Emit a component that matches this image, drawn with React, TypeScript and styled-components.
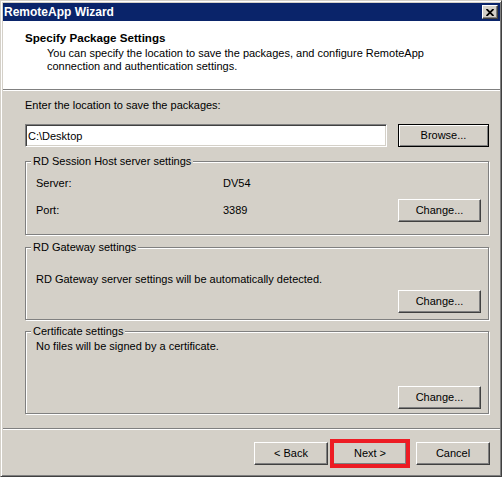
import React from "react";
import styled, { createGlobalStyle, css } from "styled-components";

const GlobalStyle = createGlobalStyle`
  html, body {
    margin: 0;
    padding: 0;
    background: #ffffff;
  }
  body {
    font-family: "Liberation Sans", Arial, sans-serif;
    font-size: 11px;
    color: #000;
  }
  button, input {
    font: inherit;
    color: inherit;
  }
`;

const Window = styled.div`
  width: 502px;
  height: 477px;
  box-sizing: border-box;
  display: flex;
  flex-direction: column;
  background: #d4d0c8;
  border: 1px solid;
  border-color: #d4d0c8 #404040 #404040 #d4d0c8;
  box-shadow: inset 1px 1px 0 #fff, inset -1px -1px 0 #808080;
  padding: 2px 1px 1px 2px;
`;

const TitleBar = styled.div`
  flex: none;
  height: 18px;
  display: flex;
  align-items: center;
  justify-content: space-between;
  background: #0a246a;
  padding: 0 2px 0 1px;
`;

const Title = styled.span`
  color: #fff;
  font-weight: bold;
  font-size: 12px;
  line-height: 18px;
`;

const CloseButton = styled.button`
  width: 16px;
  height: 14px;
  box-sizing: border-box;
  padding: 0;
  display: flex;
  align-items: center;
  justify-content: center;
  background: #d4d0c8;
  border: 1px solid;
  border-color: #fff #404040 #404040 #fff;
  box-shadow: inset -1px -1px 0 #808080;
`;

const Header = styled.div`
  flex: none;
  height: 68px;
  box-sizing: border-box;
  background: #fff;
  padding: 10px 0 0 22px;
`;

const HeaderTitle = styled.div`
  font-weight: bold;
  font-size: 11.6px;
  line-height: 14px;
`;

const HeaderText = styled.div`
  margin: 2px 0 0 22px;
  line-height: 13px;
`;

const Separator = styled.div`
  flex: none;
  border-top: 1px solid #808080;
  border-bottom: 1px solid #fff;
`;

const Body = styled.div`
  flex: 1;
  display: flex;
  flex-direction: column;
  padding: 8px 11px 0 22px;
`;

const Label = styled.div`
  line-height: 13px;
`;

const InputRow = styled.div`
  display: flex;
  gap: 11px;
  margin-top: 12px;
`;

const PathInput = styled.input`
  flex: 1;
  min-width: 0;
  height: 23px;
  box-sizing: border-box;
  padding: 0 2px;
  background: #fff;
  border: 1px solid;
  border-color: #808080 #fff #fff #808080;
  box-shadow: inset 1px 1px 0 #404040, inset -1px -1px 0 #d4d0c8;
  outline: none;
`;

const Button = styled.button<{ $w: number; $default?: boolean; $ml?: number; $marked?: boolean }>`
  flex: none;
  width: ${(p) => p.$w}px;
  height: 23px;
  box-sizing: border-box;
  padding: 0;
  margin-left: ${(p) => p.$ml ?? 0}px;
  background: #d4d0c8;
  border: 1px solid;
  border-color: #fff #404040 #404040 #fff;
  box-shadow: inset -1px -1px 0 #808080;
  line-height: 13px;
  ${(p) =>
    p.$default &&
    css`
      border-color: #000;
      box-shadow: inset 1px 1px 0 #fff, inset -1px -1px 0 #808080;
    `}
  ${(p) =>
    p.$marked &&
    css`
      outline: 4px solid #ed1c24;
      outline-offset: -1px;
    `}
`;

const Group = styled.div<{ $h: number; $mt: number }>`
  height: ${(p) => p.$h}px;
  margin-top: ${(p) => p.$mt}px;
  box-sizing: border-box;
  display: flex;
  flex-direction: column;
  border: 1px solid #808080;
  box-shadow: 1px 1px 0 #fff, inset 1px 1px 0 #fff;
  padding: 0 7px 0 10px;
`;

const Legend = styled.div`
  align-self: flex-start;
  margin: -7px 0 0 -5px;
  padding: 0 2px;
  line-height: 13px;
  background: #d4d0c8;
`;

const InfoGrid = styled.div`
  display: grid;
  grid-template-columns: 187px 1fr auto;
  align-items: center;
  row-gap: 9px;
  margin-top: 9px;
  line-height: 13px;
`;

const GroupText = styled.div<{ $mt: number }>`
  margin-top: ${(p) => p.$mt}px;
  line-height: 13px;
`;

const GroupAction = styled.div<{ $mt: number }>`
  display: flex;
  justify-content: flex-end;
  margin-top: ${(p) => p.$mt}px;
`;

const Footer = styled.div`
  flex: none;
  height: 45px;
  box-sizing: border-box;
  display: flex;
  justify-content: flex-end;
  align-items: flex-start;
  padding: 12px 10px 0 0;
`;

const CloseIcon = () => (
  <svg width="8" height="7" viewBox="0 0 8 7">
    <path d="M0.5 0 L7.5 7 M7.5 0 L0.5 7" stroke="#000" strokeWidth="1.8" />
  </svg>
);

export default function App() {
  return (
    <>
      <GlobalStyle />
      <Window>
        <TitleBar>
          <Title>RemoteApp Wizard</Title>
          <CloseButton aria-label="Close">
            <CloseIcon />
          </CloseButton>
        </TitleBar>

        <Header>
          <HeaderTitle>Specify Package Settings</HeaderTitle>
          <HeaderText>
            You can specify the location to save the packages, and configure RemoteApp
            <br />
            connection and authentication settings.
          </HeaderText>
        </Header>
        <Separator />

        <Body>
          <Label>Enter the location to save the packages:</Label>
          <InputRow>
            <PathInput defaultValue="C:\Desktop" />
            <Button $w={91} $default>
              Browse...
            </Button>
          </InputRow>

          <Group $h={74} $mt={14}>
            <Legend>RD Session Host server settings</Legend>
            <InfoGrid>
              <span>Server:</span>
              <span>DV54</span>
              <span />
              <span>Port:</span>
              <span>3389</span>
              <Button $w={83}>Change...</Button>
            </InfoGrid>
          </Group>

          <Group $h={73} $mt={12}>
            <Legend>RD Gateway settings</Legend>
            <GroupText $mt={19}>RD Gateway server settings will be automatically detected.</GroupText>
            <GroupAction $mt={4}>
              <Button $w={83}>Change...</Button>
            </GroupAction>
          </Group>

          <Group $h={83} $mt={11}>
            <Legend>Certificate settings</Legend>
            <GroupText $mt={2}>No files will be signed by a certificate.</GroupText>
            <GroupAction $mt={33}>
              <Button $w={83}>Change...</Button>
            </GroupAction>
          </Group>
        </Body>

        <Separator />
        <Footer>
          <Button $w={74}>&lt; Back</Button>
          <Button $w={74} $ml={5} $marked>
            Next &gt;
          </Button>
          <Button $w={74} $ml={9}>
            Cancel
          </Button>
        </Footer>
      </Window>
    </>
  );
}
